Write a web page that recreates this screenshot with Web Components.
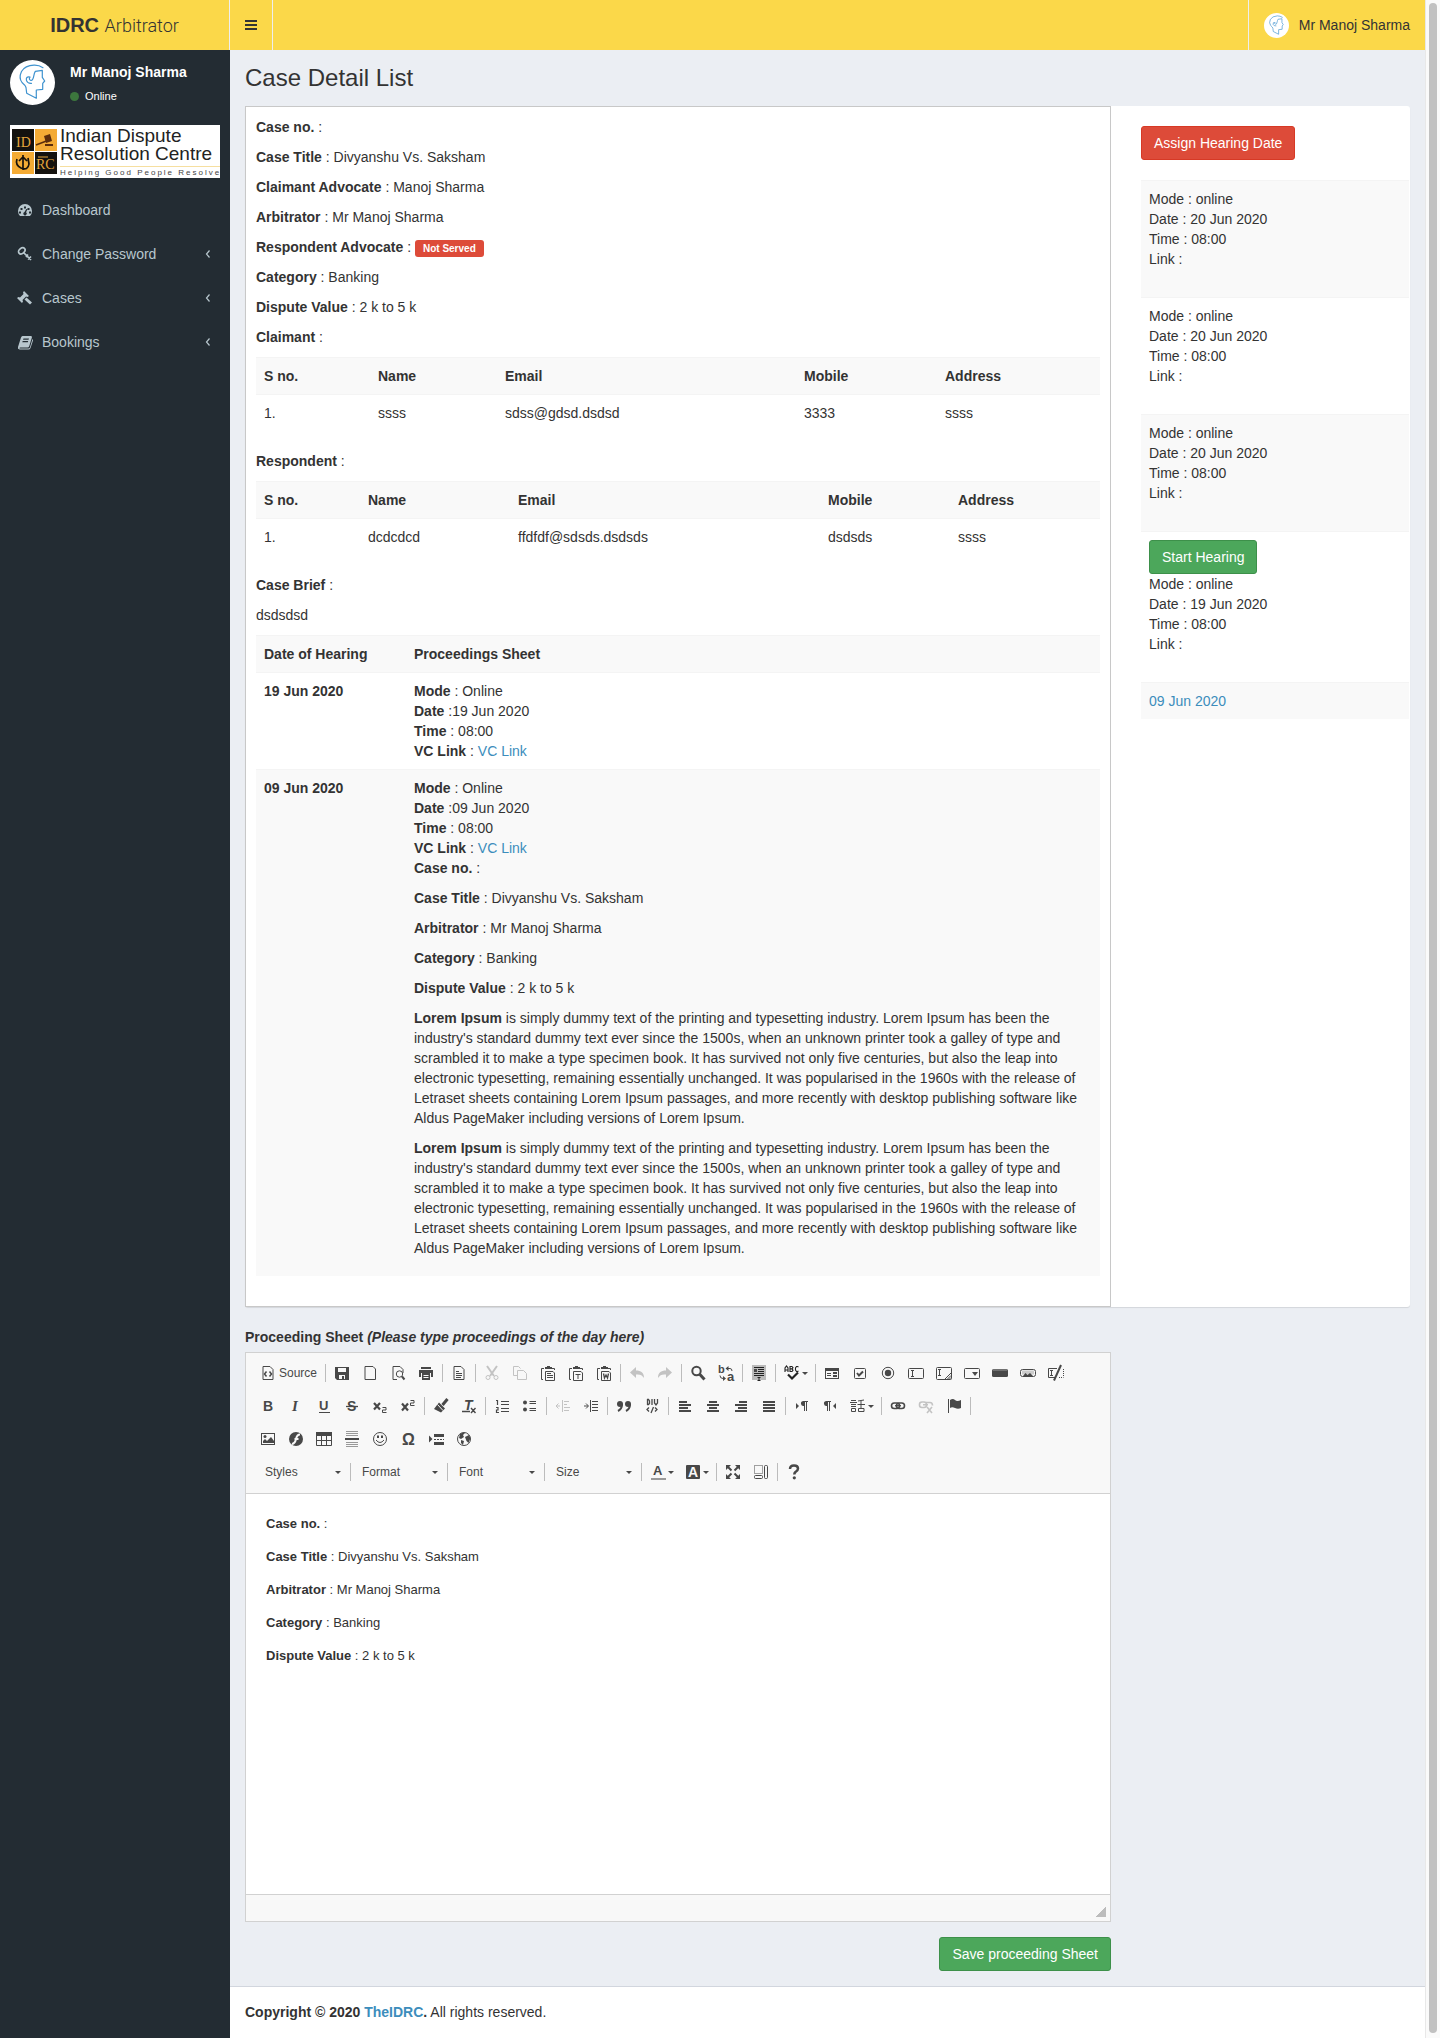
<!DOCTYPE html>
<html lang="en">
<head>
<meta charset="utf-8">
<meta name="viewport" content="width=device-width, initial-scale=1">
<title>IDRC Arbitrator - Case Detail List</title>
<style>
  :root {
    --yellow: #fbd849;
    --dark: #232c33;
    --page: #ebeef3;
    --text: #333;
    --link: #3c8dbc;
    --aside: 299px;
  }
  html { min-height: 100%; }
  body {
    margin: 0;
    font: 14px/20px "Liberation Sans", Arial, sans-serif;
    color: var(--text);
    background: var(--page);
  }
</style>
</head>
<body>
<idrc-app></idrc-app>

<script>
/* ---------- shared helpers ---------- */
function define(name, html) {
  const tpl = document.createElement('template');
  tpl.innerHTML = html;
  customElements.define(name, class extends HTMLElement {
    constructor() {
      super();
      this.attachShadow({ mode: 'open' }).append(tpl.content.cloneNode(true));
    }
  });
}

/* Every toolbar glyph sits on a 16 x 16 grid. */
const page = '<path d="M3 1.500h7l3 3v10H3z"/>';
const clip = '<path d="M4 3.500H1.500v11H3M14.500 5V3.500H12"/><path class="f" d="M5 3V2h2V1h3v1h2v2H5z"/><path d="M5.500 6.500h7.500l1.500 1.500v7.500h-9z" fill="#f8f8f8"/>';
const field = '<rect x=".5" y="3.500" width="15" height="10" rx="1"/>';
const bars = (rows) => '<path class="f" d="' + rows.map(([x, w], i) => `M${x} ${3 + i * 3}h${w}v2h-${w}z`).join('') + '"/>';
const ICONS = {
  source: page + '<path d="M6.500 6.500L4.500 9l2 2.500M9.500 6.500l2 2.500-2 2.500" stroke-width="1.500"/>',
  save: '<path class="f" fill-rule="evenodd" d="M1 2h14v13H3l-2-2zM4 3v4h8V3zM5 10v4h6v-4z"/><path class="f" d="M8 11h2v3H8z"/>',
  newpage: '<path d="M3 1.500h8l2.500 2.500v10.500H3z"/>',
  preview: '<path d="M7 14.500H3v-13h7l3 3V8"/><circle cx="9.500" cy="9" r="3.200"/><path d="M12 11.500l2.500 3" stroke-width="2"/>',
  print: '<path class="f" d="M3 2h10v2H3zM1 5h14v7h-2V8H3v4H1z"/><path class="f" fill-rule="evenodd" d="M4 8h8v7H4zM5.500 10v1h5v-1zM5.500 12v1h5v-1z"/>',
  templates: page + '<path d="M5 6.500h3M5 8.500h6M5 10.500h6M5 12.500h5"/>',
  cut: '<path d="M3 1l7 10M13 1L6 11" stroke-width="2"/><circle cx="4" cy="12.500" r="2"/><circle cx="12" cy="12.500" r="2"/>',
  copy: '<path d="M5 10.500H1.500v-9h5l2 2"/><path d="M5.500 5.500h6l3 3v6h-9z"/>',
  paste: clip + '<path d="M7 8.500h4M7 10.500h6M7 12.500h6"/>',
  pastetext: clip + '<path d="M7.500 9.500h5M10 9v5"/>',
  pasteword: clip + '<path d="M7.500 8.500l1 4.500 1.500-3 1.500 3 1-4.500" stroke-width="1.300"/>',
  undo: '<path class="f" d="M1 7.500L7 2v3.500c5 0 8 2 8 7.500-2-3-4-4-8-3.500V13z"/>',
  redo: '<path class="f" d="M15 7.500L9 2v3.500c-5 0-8 2-8 7.500 2-3 4-4 8-3.500V13z"/>',
  find: '<circle cx="6.500" cy="6" r="4.200" stroke-width="2"/><path d="M9.500 9l5 5.500" stroke-width="3"/>',
  replace: '<text x="0" y="8" font-size="11" font-weight="bold">b</text><text x="9" y="16" font-size="13" font-weight="bold">a</text><path d="M9 3.500h3q2 0 2 2.500M2 10.500q0 3 3 3h1"/><path class="f" d="M10.500 1v5L7.500 3.500zM5 11v5l3-2.500z"/>',
  selectall: '<path fill="#bbb" stroke="none" d="M1 0h14v15H1z"/><path d="M3 2.500h10M7 4.500h6M7 6.500h6M3 8.500h10M3 10.500h10M8 12.500v3M6.500 15.500h3M6.500 12.500h3" stroke="#222"/><path class="f" d="M3 4h3v3H3z"/>',
  spell: '<path d="M1 7V3l1.500-2L4 3v4M1 5h3M6 1v6M6 1.500h2l1 1.200-1 1.200H6h2l1 1.300-1 1.300H6M14.500 2l-1-.5h-1L11.500 3v2l1 1.500h1l1-.5" stroke="#222" stroke-width="1.100"/><path d="M4 9.500l4 4 6-6" stroke="#222" stroke-width="2.200"/>',
  form: '<path class="f" fill-rule="evenodd" d="M1 3h14v11H1zM2 6v7h12V6z"/><path d="M3 8.500h4M3 10.500h4"/><path class="f" d="M9 7h4v2H9zM9 10h4v2H9z"/>',
  checkbox: '<rect x="2.500" y="3.500" width="11" height="10" rx="1"/><path d="M5 8l2 2.500 4-4" stroke-width="2"/>',
  radio: '<circle cx="8" cy="8" r="5.700"/><circle class="f" cx="8" cy="8" r="3.200"/>',
  textfield: field + '<path d="M3 5.500h3M3 11.500h3M4.500 5.500v6"/>',
  textarea: '<rect x=".5" y="2.500" width="15" height="12" rx="1"/><path d="M2 4.500h3M2 10.500h3M3.500 4.500v6M9 14l6-6M11.500 14l3.500-3.500M13.500 14l1.500-1.500"/>',
  select: field + '<path class="f" d="M8 7h6l-3 4z"/>',
  button: '<rect class="f" x="0" y="4" width="16" height="8" rx="1.500"/><path d="M1 5h14" stroke="#999"/>',
  imagebutton: '<rect x=".5" y="4.500" width="15" height="7" rx="2"/><path fill="#ccc" stroke="none" d="M2 5.500h12v4H2z"/><path class="f" d="M3 11l2.500-3 2 2 2.500-2 3 3z"/>',
  hidden: '<path d="M9 3.500H.5v9H7"/><path d="M11 12.500h4.500M15.500 4v8" stroke-dasharray="1 1"/><path d="M2 5.500h3M2 10.500h3M3.500 5.500v5"/><path d="M13 0L6 15.500" stroke-width="2"/>',
  bold: '<text x="3" y="13" font-size="14" font-weight="bold">B</text>',
  italic: '<text x="4" y="13" font-size="15" font-weight="bold" font-style="italic" style="font-family:\'Liberation Serif\'">I</text>',
  underline: '<text x="3" y="11.500" font-size="13" font-weight="bold">U</text><path d="M3 14.500h11"/>',
  strike: '<text x="3" y="13" font-size="14" font-weight="bold">S</text><path d="M2 8.500h12" stroke-width="1.300"/>',
  sub: '<path d="M2 5l6 6.500M8 5l-6 6.500" stroke-width="2.200"/><path d="M10.500 9.500h3.500v2.500h-3.500v2.500h4"/>',
  sup: '<path d="M2 5.500l6 7M8 5.500l-6 7" stroke-width="2.200"/><path d="M10.500 2.500h3.500v2.500h-3.500v2.500h4"/>',
  brush: '<path d="M14.500 1L9.500 7" stroke-width="3"/><path class="f" d="M6 4.500l6 6-4 4L1 11l1.500-2z"/><path d="M4.500 6.500l5.500 6" stroke="#f8f8f8"/>',
  clear: '<text x="3" y="11.500" font-size="14" font-weight="bold" font-style="italic">T</text><path d="M1 13.500h8M10 10l4.500 5M14.500 10L10 15" stroke-width="1.400"/>',
  ol: '<path d="M2 2.500h1.500v4.500M2 9.500h2v2.500H2.500v2.500h2.500M7 3.500h8M7 6.500h8M7 10.500h8M7 13.500h8" stroke-width="1.200"/>',
  ul: '<circle class="f" cx="3" cy="4.500" r="2"/><circle class="f" cx="3" cy="11.500" r="2"/><path d="M7.500 3.500H14M7.500 5.500H14M7.500 10.500H14M7.500 12.500H14"/>',
  outdent: '<path d="M7.500 2v12M9 3.500h5M9 6.500h3M9 9.500h6M9 12.500h5M1 8h4"/><path d="M3.500 5.500L1 8l2.500 2.500"/>',
  indent: '<path d="M7.500 2v12M9 3.500h6M9 6.500h6M9 9.500h6M9 12.500h6M1 8h4"/><path d="M3 5.500L5.500 8 3 10.500"/>',
  quote: '<circle class="f" cx="4" cy="6" r="3"/><circle class="f" cx="12" cy="6" r="3"/><path d="M6 6q0 5-4 7M14 6q0 5-4 7" stroke-width="2"/>',
  div: '<path d="M3.500 1v6M3 1.500h1.500l1 1.500v2.500L4.500 6.500H3M8 1v6M10.500 1v4l1.500 2 1.500-2V1M5 9.500l-2 2 2 2M11 9.500l2 2-2 2M9.500 9L7 15" stroke-width="1.300"/>',
  left: bars([[2, 8], [2, 12], [2, 9], [2, 12]]),
  center: bars([[4, 8], [2, 12], [4, 8], [2, 12]]),
  right: bars([[6, 8], [2, 12], [5, 9], [2, 12]]),
  justify: bars([[2, 12], [2, 12], [2, 12], [2, 12]]),
  ltr: '<path class="f" d="M2 5l3 3-3 3zM9 3h5v1h-1v9h-1V4h-1v9h-1V8a2.500 2.500 0 0 1-1-5z"/>',
  rtl: '<path class="f" d="M14 5l-3 3 3 3zM4 3h5v1H8v9H7V4H6v9H5V8a2.500 2.500 0 0 1-1-5z"/>',
  lang: '<path d="M1 2.500h5M0 4.500h7M1 6.500h5M1 8.500h5M1.500 10.500h4v3h-4zM8 3l6-1M7.500 6.500H15M11 3v7M8.500 10.500h5.500v3H8.500z"/>',
  link: '<rect x="1.500" y="5" width="8" height="5.500" rx="2.700" stroke-width="1.600"/><rect x="6.500" y="5" width="8" height="5.500" rx="2.700" stroke-width="1.600"/><path d="M5 7.700h6" stroke-width="1.300"/>',
  unlink: '<rect x="1.500" y="4" width="7" height="5.500" rx="2.500" stroke-width="1.600"/><path d="M8 4.500h4q2.500 0 2.500 3M5 6.700h5M9 9l5 6M14 9l-5 6" stroke-width="1.600"/>',
  anchor: '<path d="M2.500 1v14"/><path class="f" d="M4 2q3-2 5 0t6 0v8q-3 1.500-6 0t-5 0z"/>',
  image: '<rect x="1.500" y="2.500" width="13" height="11"/><circle class="f" cx="5" cy="5.500" r="1.500"/><path class="f" d="M3 12v-2l2-2 2 2 4-4 3 4v2z"/>',
  flash: '<circle class="f" cx="8" cy="8" r="7"/><path d="M12 3.500Q9 3.500 8 8t-4 5M6.500 8h4" stroke="#f8f8f8" stroke-width="2"/>',
  table: '<path d="M.5 4.500v10h15v-10M.5 9.500h15M5.500 5v9.500M10.500 5v9.500"/><path class="f" d="M0 1h16v4H0z"/>',
  hr: '<path d="M2 .5h12M2 2.500h12M2 4.500h12M2 11.500h12M2 13.500h12M2 15.500h12" stroke="#999"/><path class="f" d="M1 7h14v2H1z"/>',
  smiley: '<circle cx="8" cy="8" r="6.500"/><path class="f" d="M5 4.500h2V7H5zM9 4.500h2V7H9z"/><path d="M4 9q4 5 8 0"/>',
  omega: '<text x="2" y="14" font-size="16" font-weight="bold">Ω</text>',
  pagebreak: '<path class="f" d="M1 4.500L4.500 8 1 11.500zM6 3h10v3H6zM6 11h10v3H6z"/><path d="M6 8.500h10" stroke-dasharray="2 1"/>',
  iframe: '<circle cx="8" cy="8" r="6.500"/><path class="f" d="M4 3q3-2 5-1L7 4l1 2-3 2-2-1zM9 6l4-2 1.500 3-2 5-2-2zM5 9l3 1-1 4-2-2z"/>',
  textcolor: '<text x="3" y="11" font-size="13" font-weight="bold">A</text><path fill="#999" stroke="none" d="M1 14h15v2H1z"/>',
  bgcolor: '<rect class="f" x="1" y="1" width="14" height="14" rx="1"/><text x="3" y="13" font-size="14" font-weight="bold" style="fill:#f8f8f8">A</text>',
  maximize: '<path d="M2 2l4.500 4.500M14 2L9.500 6.500M2 14l4.500-4.500M14 14L9.500 9.500" stroke-width="2"/><path class="f" d="M1 1h5L1 6zM15 1h-5l5 5zM1 15h5l-5-5zM15 15h-5l5-5z"/>',
  blocks: '<path d="M1.500 1.500h8v8h-8z" stroke-dasharray="1 1"/><rect x="1.500" y="11.500" width="8" height="3" rx="1"/><rect x="11.500" y="1.500" width="3" height="13" rx="1"/>',
  help: '<path d="M4 5q0-3.500 4-3.500t4 3q0 2-2.500 3.500-1.200 1-1.200 2.500" stroke-width="2.500"/><circle class="f" cx="8.300" cy="13.800" r="1.600"/>',
  /* sidebar glyphs */
  dashboard: '<path class="f" fill-rule="evenodd" d="M3 14q-2-2-2-5a7 7 0 0 1 14 0q0 3-2 5zM7 4.500v2h2v-2zM3.500 6v2h2V6zM10.500 6v2h2V6zM2 9.500v2h2v-2zM12 9.500v2h2v-2zM9.300 7L7.500 10a1.700 1.700 0 1 0 1.600.3l1.300-3z"/>',
  key: '<ellipse cx="4.800" cy="4.800" rx="3.600" ry="2.600" transform="rotate(-40 4.800 4.800)" stroke-width="1.700"/><path d="M6.500 6.500l7.500 7.500M9 11l2-2.500M11 13.500l3-3" stroke-width="1.700"/>',
  gavel: '<path class="f" d="M7 1l5 5-1.500 1L9 6.500 5.500 10l.5 1.500-1 1.500-5-5 1.500-1L3 7.500 6.500 4 6 2.500z"/><path d="M8.500 8.500l5.500 5" stroke-width="3"/>',
  book: '<path class="f" fill-rule="evenodd" d="M5.500 2H14q1.300.3.900 1.500L12.300 12q-.4 1.500-1.800 1.500H3.200q-.9.200-.7 1h9q1 0 1.400-1L15.500 5q.8.500.5 1.500L13.500 14q-.5 1.500-2 1.500H2.500Q.4 15.200 1 13L4 3.500Q4.500 2 5.500 2zM6.500 4.500L6 5.700h5.500l.5-1.200zM5.700 7l-.4 1.200h5.500l.4-1.200z"/>',
  bars: '<path class="f" d="M2 3h12v2H2zM2 7h12v2H2zM2 11h12v2H2z"/>',
  angle: '<path d="M9.500 4.500L6.500 8l3 3.500" stroke-width="1.200"/>'
};

/* <ui-icon name="..."> : a 16px glyph in the current colour */
customElements.define('ui-icon', class extends HTMLElement {
  constructor() {
    super();
    this.attachShadow({ mode: 'open' }).innerHTML = `
      <style>
        :host { display: block; width: 16px; height: 16px; flex: none; }
        svg { display: block; width: 100%; height: 100%; fill: none; stroke: currentColor; overflow: visible; }
        .f, text { fill: currentColor; stroke: none; }
        text { font-family: "Liberation Sans", Arial, sans-serif; }
      </style>
      <svg viewBox="0 0 16 16" aria-hidden="true">${ICONS[this.getAttribute('name')] || ''}</svg>`;
  }
});

/* <user-avatar> : round head profile, sized by --size */
define('user-avatar', `
  <style>
    :host { display: block; width: var(--size, 45px); height: var(--size, 45px); flex: none; }
    svg { display: block; width: 100%; height: 100%; }
  </style>
  <svg viewBox="0 0 45 45" aria-hidden="true">
    <circle cx="22.500" cy="22.500" r="22.500" fill="#fff"/>
    <path fill="none" stroke="#3f93cf" stroke-width="1.200" stroke-linejoin="round" stroke-linecap="round"
      d="M33 7.700Q29 5 24 5.200 15 5.500 11.500 11.500 8.500 18 12 22.500q3.500 3 4 5l.7 5.800L26.300 38.300V30l6.400-.7v-6l2-2.300-2.400-3.700v-7l-7 1q-1 1.500-1.500 4.500-1 5.500-3.300 4.500-2-1-.5-3.200-4.500-1-3.500 3.500 1 3 5 2.700"/>
  </svg>`);

/* <ui-button kind="danger|success"> */
define('ui-button', `
  <style>
    :host { display: inline-block; vertical-align: top; --bg: #4ca75b; --line: #3d904a; }
    :host([kind="danger"]) { --bg: #dd4b39; --line: #d73925; }
    button {
      display: block; margin: 0; padding: 6px 12px; font: inherit; line-height: 20px; color: #fff;
      background: var(--bg); border: 1px solid var(--line); border-radius: 3px; cursor: pointer;
    }
  </style>
  <button type="button"><slot></slot></button>`);

/* <field-line label="..."> value */
customElements.define('field-line', class extends HTMLElement {
  constructor() {
    super();
    this.attachShadow({ mode: 'open' }).innerHTML = `
      <style>
        :host { display: block; margin: 0 0 var(--field-gap, 10px); }
        p { margin: 0; }
      </style>
      <p><b>${this.getAttribute('label')}</b> : <slot></slot></p>`;
  }
});

/* ---------- header ---------- */
define('app-header', `
  <style>
    :host { display: flex; height: 50px; background: var(--yellow); }
    a { color: inherit; text-decoration: none; }
    .logo {
      box-sizing: border-box; width: 230px; border-right: 1px solid #eee; flex: none;
      font-size: 20px; line-height: 50px; text-align: center;
    }
    .logo span { font: 300 18px "Roboto", "Liberation Sans", sans-serif; }
    .toggle {
      display: flex; align-items: center; padding: 0 13px; margin: 0; border: 0;
      border-right: 1px solid #eee; background: none; color: #333; cursor: pointer;
    }
    .user {
      display: flex; align-items: center; gap: 10px; margin-left: auto; padding: 0 15px;
      border-left: 1px solid #eee; --size: 25px;
    }
  </style>
  <a class="logo" href="#"><b>IDRC</b> <span>Arbitrator</span></a>
  <button class="toggle" type="button" aria-label="Toggle navigation"><ui-icon name="bars"></ui-icon></button>
  <a class="user" href="#"><user-avatar></user-avatar>Mr Manoj Sharma</a>`);

/* ---------- sidebar ---------- */
customElements.define('side-item', class extends HTMLElement {
  constructor() {
    super();
    this.attachShadow({ mode: 'open' }).innerHTML = `
      <style>
        :host { display: block; }
        a { display: flex; align-items: center; gap: 9px; padding: 12px 14px 12px 17px; color: #b8c7ce; text-decoration: none; }
        .more { margin-left: auto; }
      </style>
      <a href="#"><ui-icon name="${this.getAttribute('icon')}"></ui-icon><slot></slot>
      ${this.hasAttribute('more') ? '<ui-icon class="more" name="angle"></ui-icon>' : ''}</a>`;
  }
});

define('brand-card', `
  <style>
    :host { display: flex; align-items: center; gap: 3px; height: 53px; padding-left: 2px; background: #fff; color: #222; overflow: hidden; }
    svg { width: 45px; height: 45px; flex: none; }
    .big { font-size: 19px; line-height: 18px; white-space: nowrap; }
    .rule { height: 1px; margin: 3px 0 1px; background: #f6dfa0; }
    .tag { font-size: 8px; line-height: 9px; letter-spacing: 2px; white-space: nowrap; color: #444; }
  </style>
  <svg viewBox="0 0 45 45" aria-hidden="true">
    <path fill="#14120f" d="M0 0h22v22H0zM23 23h22v22H23z"/>
    <path fill="#f4ab35" d="M23 0h22v22H23zM0 23h22v22H0z"/>
    <g font-family="Liberation Serif" font-size="14" fill="#e5a63c"><text x="4" y="18">ID</text><text x="24" y="40">RC</text></g>
    <path d="M24 16l13-5" stroke="#5b2d0c" stroke-width="1.500"/>
    <path fill="#5b2d0c" d="M32 7l6-2 2 7-6 2zM33 15h8v2h-8z"/>
    <path d="M11 26v15M5 30q-2 6 4 9 7 3 8-4l-1-6M7 32l4-4 4 4" fill="none" stroke="#17120c" stroke-width="1.700"/>
    <path d="M26 28h10" stroke="#e5a63c"/>
  </svg>
  <div>
    <div class="big">Indian Dispute<br>Resolution Centre</div>
    <div class="rule"></div>
    <div class="tag">Helping Good People Resolve</div>
  </div>`);

define('app-sidebar', `
  <style>
    :host { display: block; width: 230px; flex: none; background: var(--dark); color: #fff; }
    .user { display: flex; gap: 15px; padding: 10px; }
    .name { font-weight: bold; padding-top: 2px; }
    .state { display: flex; align-items: center; gap: 6px; font-size: 11px; line-height: 18px; margin-top: 5px; color: #fff; text-decoration: none; }
    .dot { width: 9px; height: 9px; border-radius: 50%; background: #3c763d; }
    brand-card { margin: 10px 10px; }
  </style>
  <div class="user">
    <user-avatar></user-avatar>
    <div>
      <div class="name">Mr Manoj Sharma</div>
      <a class="state" href="#"><span class="dot"></span>Online</a>
    </div>
  </div>
  <brand-card></brand-card>
  <nav>
    <side-item icon="dashboard">Dashboard</side-item>
    <side-item icon="key" more>Change Password</side-item>
    <side-item icon="gavel" more>Cases</side-item>
    <side-item icon="book" more>Bookings</side-item>
  </nav>`);

/* ---------- tables ---------- */
const TABLE_CSS = `
  table { width: 100%; border-collapse: separate; border-spacing: 0; margin: 0 0 20px; }
  th, td { padding: 8px; border-top: 1px solid #f4f4f4; text-align: left; vertical-align: top; }
  tr.odd { background: #f9f9f9; }
  a { color: var(--link); text-decoration: none; }`;

/* <party-table cols="w,w,w,w" row="a|b|c|d|e"> */
customElements.define('party-table', class extends HTMLElement {
  constructor() {
    super();
    const cols = this.getAttribute('cols').split(',');
    const row = this.getAttribute('row').split('|');
    this.attachShadow({ mode: 'open' }).innerHTML = `
      <style>:host { display: block; } ${TABLE_CSS} table { table-layout: fixed; }</style>
      <table>
        <colgroup>${cols.map(w => `<col style="width:${w}px">`).join('')}<col></colgroup>
        <thead><tr class="odd"><th>S no.</th><th>Name</th><th>Email</th><th>Mobile</th><th>Address</th></tr></thead>
        <tbody><tr>${row.map(c => `<td>${c}</td>`).join('')}</tr></tbody>
      </table>`;
  }
});

const LOREM = `<p><b>Lorem Ipsum</b> is simply dummy text of the printing and typesetting industry. Lorem Ipsum has been the industry's standard dummy text ever since the 1500s, when an unknown printer took a galley of type and scrambled it to make a type specimen book. It has survived not only five centuries, but also the leap into electronic typesetting, remaining essentially unchanged. It was popularised in the 1960s with the release of Letraset sheets containing Lorem Ipsum passages, and more recently with desktop publishing software like Aldus PageMaker including versions of Lorem Ipsum.</p>`;

define('proceedings-table', `
  <style>
    :host { display: block; }
    ${TABLE_CSS}
    .date { width: 134px; }
    p { margin: 0 0 10px; }
  </style>
  <table>
    <thead><tr class="odd"><th class="date">Date of Hearing</th><th>Proceedings Sheet</th></tr></thead>
    <tbody>
      <tr>
        <th>19 Jun 2020</th>
        <td><b>Mode</b> : Online<br><b>Date</b> :19 Jun 2020<br><b>Time</b> : 08:00<br><b>VC Link</b> : <a href="#">VC Link</a></td>
      </tr>
      <tr class="odd">
        <th>09 Jun 2020</th>
        <td><b>Mode</b> : Online<br><b>Date</b> :09 Jun 2020<br><b>Time</b> : 08:00<br><b>VC Link</b> : <a href="#">VC Link</a>
          <field-line label="Case no."></field-line>
          <field-line label="Case Title">Divyanshu Vs. Saksham</field-line>
          <field-line label="Arbitrator">Mr Manoj Sharma</field-line>
          <field-line label="Category">Banking</field-line>
          <field-line label="Dispute Value">2 k to 5 k</field-line>
          ${LOREM}${LOREM}
        </td>
      </tr>
    </tbody>
  </table>`);

/* ---------- case details ---------- */
define('case-details', `
  <style>
    :host { display: block; box-sizing: border-box; padding: 10px; border: 1px solid #c8c8c8; }
    p { margin: 0 0 10px; }
    .tag {
      display: inline-block; padding: 3px 8px; border-radius: 3px; background: #dd4b39; color: #fff;
      font-size: 10px; font-weight: bold; line-height: 11px; vertical-align: middle;
    }
  </style>
  <field-line label="Case no."></field-line>
  <field-line label="Case Title">Divyanshu Vs. Saksham</field-line>
  <field-line label="Claimant Advocate">Manoj Sharma</field-line>
  <field-line label="Arbitrator">Mr Manoj Sharma</field-line>
  <field-line label="Respondent Advocate"><span class="tag">Not Served</span></field-line>
  <field-line label="Category">Banking</field-line>
  <field-line label="Dispute Value">2 k to 5 k</field-line>
  <field-line label="Claimant"></field-line>
  <party-table cols="114,127,299,141" row="1.|ssss|sdss@gdsd.dsdsd|3333|ssss"></party-table>
  <field-line label="Respondent"></field-line>
  <party-table cols="104,150,310,130" row="1.|dcdcdcd|ffdfdf@sdsds.dsdsds|dsdsds|ssss"></party-table>
  <field-line label="Case Brief"></field-line>
  <p>dsdsdsd</p>
  <proceedings-table></proceedings-table>`);

define('hearing-list', `
  <style>
    :host { display: block; padding: 20px 1px 20px 30px; }
    ${TABLE_CSS}
    table { margin-top: 20px; }
    .last { padding-bottom: 28px; }
  </style>
  <ui-button kind="danger">Assign Hearing Date</ui-button>
  <table>
    <tbody>
      <tr class="odd"><td class="last">Mode : online<br>Date : 20 Jun 2020<br>Time : 08:00<br>Link :</td></tr>
      <tr><td class="last">Mode : online<br>Date : 20 Jun 2020<br>Time : 08:00<br>Link :</td></tr>
      <tr class="odd"><td class="last">Mode : online<br>Date : 20 Jun 2020<br>Time : 08:00<br>Link :</td></tr>
      <tr><td class="last"><ui-button>Start Hearing</ui-button><br>Mode : online<br>Date : 19 Jun 2020<br>Time : 08:00<br>Link :</td></tr>
      <tr class="odd"><td><a href="#">09 Jun 2020</a></td></tr>
    </tbody>
  </table>`);

/* ---------- rich text editor ---------- */
customElements.define('tool-button', class extends HTMLElement {
  constructor() {
    super();
    const name = this.getAttribute('icon');
    this.attachShadow({ mode: 'open' }).innerHTML = `
      <style>
        :host { display: block; color: #484848; }
        :host([off]) { color: #c3c3c3; }
        button {
          display: flex; align-items: center; height: 28px; margin: 0; padding: 0 6px; border: 0;
          background: none; color: inherit; font: inherit; font-size: 12px;
        }
        slot { display: block; }
        :host([text]) slot { margin-left: 3px; }
        :host([menu]) button { padding-right: 5px; }
        i { margin-left: 3px; border: solid transparent; border-width: 3px 3px 0; border-top-color: #484848; }
        :host([menu]) ui-icon { margin-right: -1px; }
      </style>
      <button type="button" aria-label="${name}" ${this.hasAttribute('off') ? 'disabled' : ''}><ui-icon name="${name}"></ui-icon><slot></slot>${this.hasAttribute('menu') ? '<i></i>' : ''}</button>`;
  }
});

customElements.define('tool-combo', class extends HTMLElement {
  constructor() {
    super();
    const label = this.getAttribute('label');
    this.attachShadow({ mode: 'open' }).innerHTML = `
      <style>
        :host { display: grid; width: 92px; height: 28px; align-items: center; }
        select, i { grid-area: 1 / 1; }
        select {
          appearance: none; width: 100%; height: 28px; margin: 0; padding: 0 9px; border: 0;
          background: none; color: #484848; font: inherit; font-size: 12px;
        }
        i { justify-self: end; margin-right: 7px; border: solid transparent; border-width: 3px 3px 0; border-top-color: #484848; pointer-events: none; }
      </style>
      <select aria-label="${label}"><option>${label}</option></select><i></i>`;
  }
});

/* Toolbar rows: "|" is a separator, "-" a disabled tool, "+" a tool with a menu. */
const ROWS = [
  'source | save newpage preview print | templates | -cut -copy paste pastetext pasteword | -undo -redo | find replace | selectall | +spell | form checkbox radio textfield textarea select button imagebutton hidden',
  'bold italic underline strike sub sup | brush clear | ol ul | -outdent indent | quote div | left center right justify | ltr rtl +lang | link -unlink anchor |',
  'image flash table hr smiley omega pagebreak iframe',
  'Styles | Format | Font | Size | +textcolor +bgcolor | maximize blocks | help'
];
const tool = (t) => {
  if (t === '|') return '<span class="sep"></span>';
  if (/^[A-Z]/.test(t)) return `<tool-combo label="${t}"></tool-combo>`;
  if (t === 'source') return '<tool-button icon="source" text>Source</tool-button>';
  if (t[0] === '-') return `<tool-button icon="${t.slice(1)}" off></tool-button>`;
  if (t[0] === '+') return `<tool-button icon="${t.slice(1)}" menu></tool-button>`;
  return `<tool-button icon="${t}"></tool-button>`;
};

define('rich-editor', `
  <style>
    :host { display: block; border: 1px solid #d1d1d1; background: #fff; }
    .bar { display: flex; flex-direction: column; gap: 5px; padding: 6px 8px 7px; background: #f8f8f8; border-bottom: 1px solid #d1d1d1; }
    .row { display: flex; align-items: center; }
    .row.combos { padding-left: 2px; }
    .sep { width: 1px; height: 18px; margin: 0 2px; background: #bcbcbc; }
    .body { height: 360px; padding: 20px; font-size: 13px; --field-gap: 13px; outline: none; }
    .foot { display: flex; justify-content: flex-end; align-items: flex-end; height: 27px; box-sizing: border-box; padding: 4px; background: #f8f8f8; border-top: 1px solid #d1d1d1; }
    .grip { width: 10px; height: 10px; background: linear-gradient(135deg, transparent 50%, #bcbcbc 50%); }
  </style>
  <div class="bar" role="toolbar">
    ${ROWS.map((r, i) => `<div class="row${i === 3 ? ' combos' : ''}">${r.split(' ').map(tool).join('')}</div>`).join('')}
  </div>
  <div class="body" contenteditable="true" role="textbox" aria-multiline="true" aria-label="Proceeding Sheet" spellcheck="false">
    <field-line label="Case no."></field-line>
    <field-line label="Case Title">Divyanshu Vs. Saksham</field-line>
    <field-line label="Arbitrator">Mr Manoj Sharma</field-line>
    <field-line label="Category">Banking</field-line>
    <field-line label="Dispute Value">2 k to 5 k</field-line>
  </div>
  <div class="foot"><span class="grip"></span></div>`);

/* ---------- page ---------- */
define('case-page', `
  <style>
    :host { display: block; padding: 15px; }
    h1 { margin: 0 0 15px; font-size: 24px; line-height: 26px; font-weight: normal; }
    .box { display: grid; grid-template-columns: minmax(0, 1fr) var(--aside); background: #fff; border-radius: 3px; box-shadow: 0 1px 1px rgba(0,0,0,.1); }
    .sheet { margin: 20px var(--aside) 0 0; }
    .label { font-weight: bold; margin-bottom: 5px; }
    .actions { display: flex; justify-content: flex-end; margin-top: 15px; }
  </style>
  <h1>Case Detail List</h1>
  <div class="box">
    <case-details></case-details>
    <hearing-list></hearing-list>
  </div>
  <section class="sheet">
    <div class="label">Proceeding Sheet <em>(Please type proceedings of the day here)</em></div>
    <rich-editor></rich-editor>
    <div class="actions"><ui-button>Save proceeding Sheet</ui-button></div>
  </section>`);

define('app-footer', `
  <style>
    :host { display: block; padding: 15px 15px 16px; background: #fff; border-top: 1px solid #d2d6de; }
    a { color: var(--link); text-decoration: none; }
  </style>
  <strong>Copyright © 2020 <a href="#">TheIDRC</a>.</strong> All rights reserved.`);

define('scroll-rail', `
  <style>
    :host { display: flex; flex: none; width: 15px; box-sizing: border-box; padding: 3px 3px 5px; background: #fafafa; border-left: 1px solid #e8e8e8; }
    div { flex: 1; border-radius: 4px; background: #c1c1c1; }
  </style>
  <div></div>`);

define('idrc-app', `
  <style>
    :host { display: flex; min-height: 100vh; }
    .app { flex: 1; min-width: 0; display: flex; flex-direction: column; }
    .cols { flex: 1; display: flex; }
    main { flex: 1; min-width: 0; display: flex; flex-direction: column; background: var(--page); }
    case-page { flex: 1; }
  </style>
  <div class="app">
    <app-header></app-header>
    <div class="cols">
      <app-sidebar></app-sidebar>
      <main><case-page></case-page><app-footer></app-footer></main>
    </div>
  </div>
  <scroll-rail></scroll-rail>`);
</script>
</body>
</html>
